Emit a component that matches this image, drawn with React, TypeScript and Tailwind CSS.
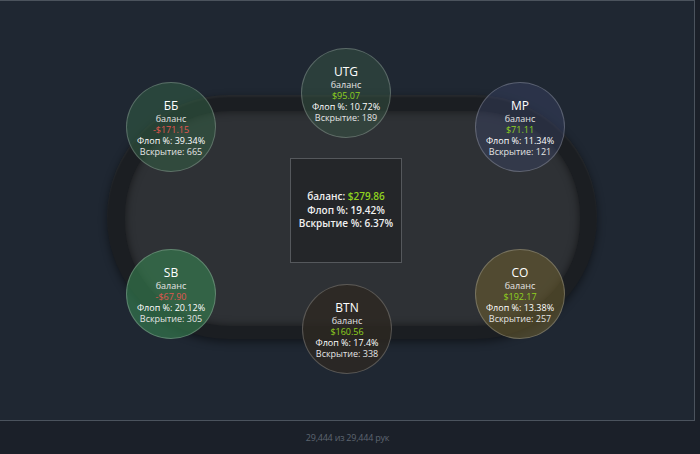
import React from 'react';

type Seat = {
  name: string;
  balance: string;
  negative?: boolean;
  flop: string;
  showdown: number;
  pos: string;
  tint: string;
};

const seats: Seat[] = [
  { name: 'UTG', balance: '$95.07', flop: '10.72%', showdown: 189, pos: 'left-[301px] top-[47px]', tint: 'bg-[rgba(58,90,70,0.45)]' },
  { name: 'ББ', balance: '-$171.15', negative: true, flop: '39.34%', showdown: 665, pos: 'left-[126px] top-[81px]', tint: 'bg-[rgba(52,100,70,0.5)]' },
  { name: 'MP', balance: '$71.11', flop: '11.34%', showdown: 121, pos: 'left-[475px] top-[81px]', tint: 'bg-[rgba(60,70,105,0.42)]' },
  { name: 'SB', balance: '-$67.90', negative: true, flop: '20.12%', showdown: 305, pos: 'left-[126px] top-[248px]', tint: 'bg-[rgba(55,130,80,0.62)]' },
  { name: 'CO', balance: '$192.17', flop: '13.38%', showdown: 257, pos: 'left-[475px] top-[248px]', tint: 'bg-[rgba(115,100,45,0.5)]' },
  { name: 'BTN', balance: '$160.56', flop: '17.4%', showdown: 338, pos: 'left-[302px] top-[283px]', tint: 'bg-[rgba(45,40,34,0.8)]' },
];

function SeatBubble({ seat }: { seat: Seat }) {
  return (
    <div
      className={`absolute ${seat.pos} ${seat.tint} w-[90px] h-[90px] rounded-full border border-[rgba(255,255,255,0.22)] flex flex-col items-center justify-center text-[9px] leading-[11px] text-[#e4e4e4]`}
    >
      <div className="text-[12px] leading-[15px] text-white">{seat.name}</div>
      <div>баланс</div>
      <div className={seat.negative ? 'text-[#e0574f]' : 'text-[#8fd21f]'}>{seat.balance}</div>
      <div className="text-white">Флоп %: {seat.flop}</div>
      <div>Вскрытие: {seat.showdown}</div>
    </div>
  );
}

export default function App() {
  return (
    <div className="w-[700px] h-[454px] bg-[#1b2029] overflow-hidden" style={{ fontFamily: '"Open Sans", "Noto Sans", sans-serif' }}>
      <div className="relative w-[695px] h-[421px] bg-[#1f2732] border-t border-r border-b border-[#4b535d]">
        {/* table rail */}
        <div className="absolute left-[107px] top-[94px] w-[490px] h-[244px] rounded-[122px] bg-[#1b1e22] shadow-[inset_0_2px_2px_rgba(255,255,255,0.05),0_3px_8px_rgba(0,0,0,0.45)] pt-[16px] pb-[13px] pl-[18px] pr-[17px] flex">
          {/* felt */}
          <div className="flex-1 rounded-[105px] bg-[#2e3135] shadow-[inset_0_0_8px_rgba(0,0,0,0.55)] relative">
            <div className="absolute left-[165px] top-[47px] w-[112px] h-[105px] bg-[#242629] border border-[#55585c] flex flex-col items-center justify-center text-[10px] leading-[13.5px] font-semibold text-[#f0f0f0]">
              <div>
                баланс: <span className="text-[#8fd21f]">$279.86</span>
              </div>
              <div>Флоп %: 19.42%</div>
              <div>Вскрытие %: 6.37%</div>
            </div>
          </div>
        </div>

        {seats.map((s) => (
          <SeatBubble key={s.name} seat={s} />
        ))}
      </div>
      <div className="w-[695px] h-[33px] flex items-center justify-center text-[9px] tracking-tight text-[#5d6570]">
        29,444 из 29,444 рук
      </div>
    </div>
  );
}
